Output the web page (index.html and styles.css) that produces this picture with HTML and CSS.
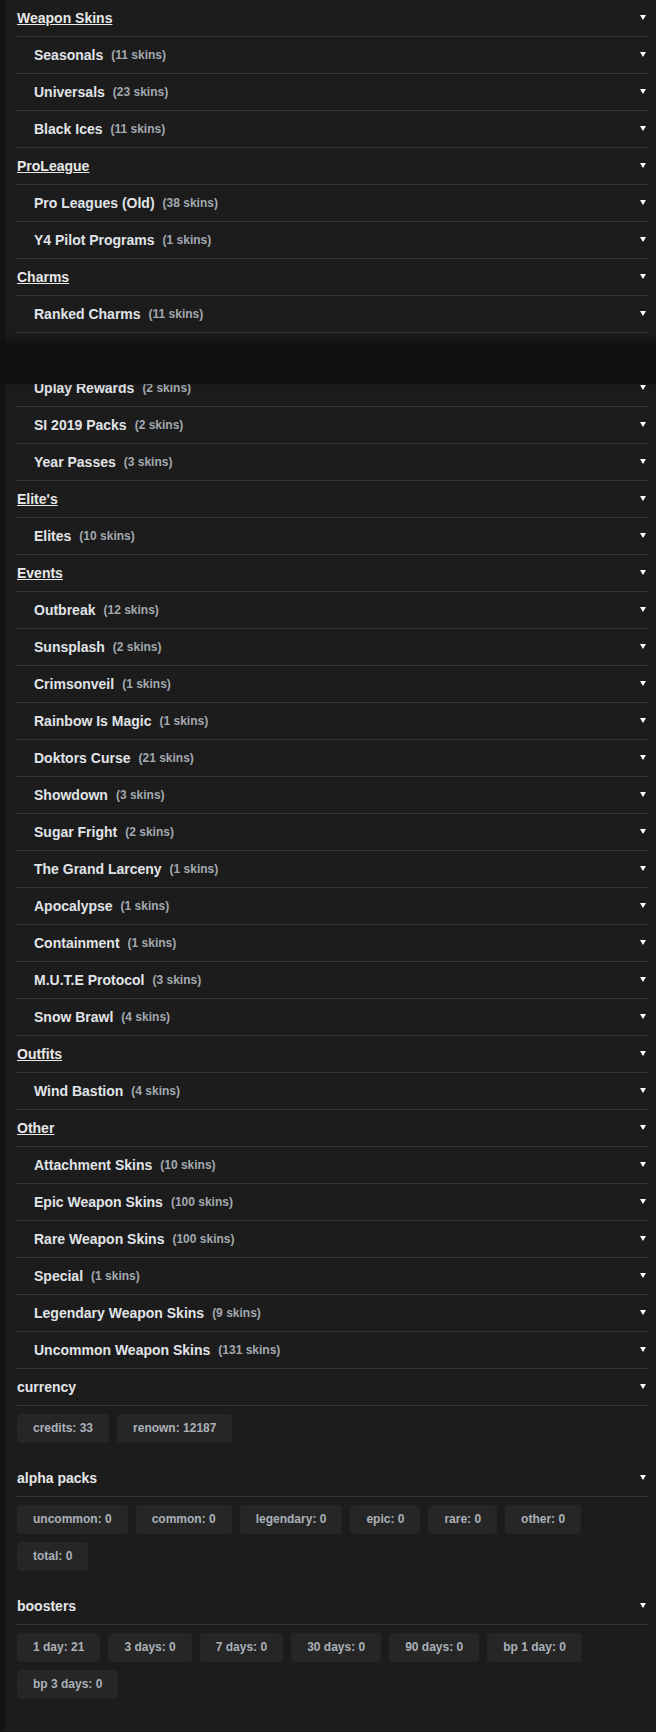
FILE: index.html
```html
<!DOCTYPE html>
<html lang="en">

<head>
    <meta charset="UTF-8">
    <meta name="viewport" content="width=device-width, initial-scale=1.0">
    <title>Inventory</title>
    <link rel="stylesheet" href="styles.css">
</head>

<body>
    <div class="page">
        <div class="skins">
            <div class="row cat"><span class="cat-name">Weapon Skins</span><span class="caret"></span></div>
            <div class="row sub"><span class="name">Seasonals</span><span class="count">(11 skins)</span><span class="caret"></span></div>
            <div class="row sub"><span class="name">Universals</span><span class="count">(23 skins)</span><span class="caret"></span></div>
            <div class="row sub"><span class="name">Black Ices</span><span class="count">(11 skins)</span><span class="caret"></span></div>

            <div class="row cat"><span class="cat-name">ProLeague</span><span class="caret"></span></div>
            <div class="row sub"><span class="name">Pro Leagues (Old)</span><span class="count">(38 skins)</span><span class="caret"></span></div>
            <div class="row sub"><span class="name">Y4 Pilot Programs</span><span class="count">(1 skins)</span><span class="caret"></span></div>

            <div class="row cat"><span class="cat-name">Charms</span><span class="caret"></span></div>
            <div class="row sub"><span class="name">Ranked Charms</span><span class="count">(11 skins)</span><span class="caret"></span></div>

            <div class="row cat"><span class="cat-name">Packs</span><span class="caret"></span></div>
            <div class="row sub"><span class="name">Uplay Rewards</span><span class="count">(2 skins)</span><span class="caret"></span></div>
            <div class="row sub"><span class="name">SI 2019 Packs</span><span class="count">(2 skins)</span><span class="caret"></span></div>
            <div class="row sub"><span class="name">Year Passes</span><span class="count">(3 skins)</span><span class="caret"></span></div>

            <div class="row cat"><span class="cat-name">Elite's</span><span class="caret"></span></div>
            <div class="row sub"><span class="name">Elites</span><span class="count">(10 skins)</span><span class="caret"></span></div>

            <div class="row cat"><span class="cat-name">Events</span><span class="caret"></span></div>
            <div class="row sub"><span class="name">Outbreak</span><span class="count">(12 skins)</span><span class="caret"></span></div>
            <div class="row sub"><span class="name">Sunsplash</span><span class="count">(2 skins)</span><span class="caret"></span></div>
            <div class="row sub"><span class="name">Crimsonveil</span><span class="count">(1 skins)</span><span class="caret"></span></div>
            <div class="row sub"><span class="name">Rainbow Is Magic</span><span class="count">(1 skins)</span><span class="caret"></span></div>
            <div class="row sub"><span class="name">Doktors Curse</span><span class="count">(21 skins)</span><span class="caret"></span></div>
            <div class="row sub"><span class="name">Showdown</span><span class="count">(3 skins)</span><span class="caret"></span></div>
            <div class="row sub"><span class="name">Sugar Fright</span><span class="count">(2 skins)</span><span class="caret"></span></div>
            <div class="row sub"><span class="name">The Grand Larceny</span><span class="count">(1 skins)</span><span class="caret"></span></div>
            <div class="row sub"><span class="name">Apocalypse</span><span class="count">(1 skins)</span><span class="caret"></span></div>
            <div class="row sub"><span class="name">Containment</span><span class="count">(1 skins)</span><span class="caret"></span></div>
            <div class="row sub"><span class="name">M.U.T.E Protocol</span><span class="count">(3 skins)</span><span class="caret"></span></div>
            <div class="row sub"><span class="name">Snow Brawl</span><span class="count">(4 skins)</span><span class="caret"></span></div>

            <div class="row cat"><span class="cat-name">Outfits</span><span class="caret"></span></div>
            <div class="row sub"><span class="name">Wind Bastion</span><span class="count">(4 skins)</span><span class="caret"></span></div>

            <div class="row cat"><span class="cat-name">Other</span><span class="caret"></span></div>
            <div class="row sub"><span class="name">Attachment Skins</span><span class="count">(10 skins)</span><span class="caret"></span></div>
            <div class="row sub"><span class="name">Epic Weapon Skins</span><span class="count">(100 skins)</span><span class="caret"></span></div>
            <div class="row sub"><span class="name">Rare Weapon Skins</span><span class="count">(100 skins)</span><span class="caret"></span></div>
            <div class="row sub"><span class="name">Special</span><span class="count">(1 skins)</span><span class="caret"></span></div>
            <div class="row sub"><span class="name">Legendary Weapon Skins</span><span class="count">(9 skins)</span><span class="caret"></span></div>
            <div class="row sub"><span class="name">Uncommon Weapon Skins</span><span class="count">(131 skins)</span><span class="caret"></span></div>
        </div>

        <div class="stat">
            <div class="row"><span class="stat-name">currency</span><span class="caret"></span></div>
            <div class="chips">
                <span class="chip">credits: 33</span>
                <span class="chip">renown: 12187</span>
            </div>
        </div>

        <div class="stat">
            <div class="row"><span class="stat-name">alpha packs</span><span class="caret"></span></div>
            <div class="chips">
                <span class="chip">uncommon: 0</span>
                <span class="chip">common: 0</span>
                <span class="chip">legendary: 0</span>
                <span class="chip">epic: 0</span>
                <span class="chip">rare: 0</span>
                <span class="chip">other: 0</span>
                <span class="chip">total: 0</span>
            </div>
        </div>

        <div class="stat">
            <div class="row"><span class="stat-name">boosters</span><span class="caret"></span></div>
            <div class="chips">
                <span class="chip">1 day: 21</span>
                <span class="chip">3 days: 0</span>
                <span class="chip">7 days: 0</span>
                <span class="chip">30 days: 0</span>
                <span class="chip">90 days: 0</span>
                <span class="chip">bp 1 day: 0</span>
                <span class="chip">bp 3 days: 0</span>
            </div>
        </div>
    </div>

    <div class="topbar"></div>
</body>

</html>
```

FILE: styles.css
```css
*{
    box-sizing: border-box;
    padding: 0;
    margin: 0;
}

body{
    background-color: #1c1c1c;
    font-family: "Liberation Sans", Arial, sans-serif;
    font-weight: bold;
    min-height: 1732px;
}

.page{
    border-left: 5px solid #131313;
    padding: 0 7px 16px 12px;
    min-height: 1732px;
}

.row{
    display: flex;
    align-items: center;
    height: 37px;
    padding-bottom: 1px;
    border-bottom: 1px solid #363636;
    font-size: 14px;
    color: #e4e6e9;
}

.cat-name{
    text-decoration: underline;
    color: #e8e8e8;
}

.sub{
    padding-left: 17px;
}

.name{
    color: #e0e4e9;
}

.count{
    margin-left: 8px;
    font-size: 12px;
    color: #a3a9b0;
}

.caret{
    margin-left: auto;
    margin-right: 3px;
    width: 0;
    height: 0;
    border-left: 3px solid transparent;
    border-right: 3px solid transparent;
    border-top: 5px solid #ffffff;
}

.stat-name{
    color: #e4e6e9;
}

.chips{
    display: flex;
    flex-wrap: wrap;
    gap: 8px;
    padding: 8px 0 17px;
}

.chip{
    height: 29px;
    line-height: 28px;
    padding: 0 16px;
    border-radius: 4px;
    background-color: #262626;
    color: #aab1b9;
    font-size: 12px;
}

.topbar{
    position: absolute;
    top: 343px;
    left: 0;
    right: 0;
    height: 41px;
    background-color: #111111;
    box-shadow: 0 -3px 8px rgba(0, 0, 0, 0.45);
}
```
